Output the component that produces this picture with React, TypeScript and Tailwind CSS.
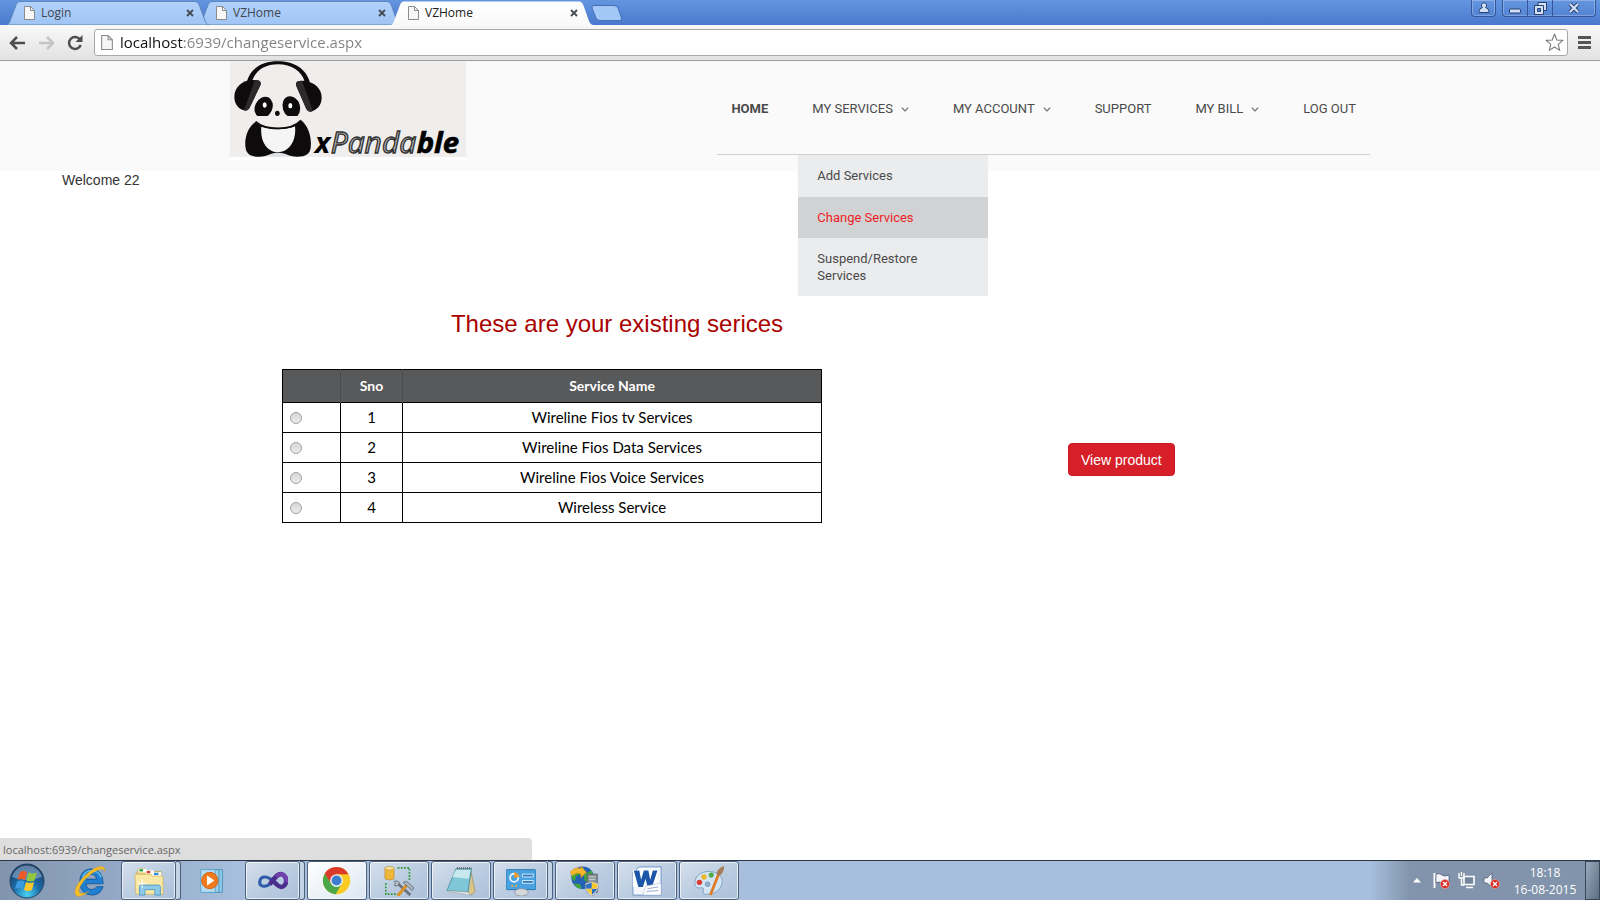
import type { ReactNode } from "react";

const UI = "font-['Open_Sans','Noto_Sans',sans-serif]";

function PageIcon({ className }: { className: string }) {
  return (
    <svg viewBox="0 0 11 14" className={className} aria-hidden="true">
      <path d="M.5.5h6l4 4v9H.5z" fill="#f7f7f7" stroke="#8b8b8b" />
      <path d="M6.5.5v4h4" fill="none" stroke="#8b8b8b" />
    </svg>
  );
}

function BrowserTab({ title, active, className }: { title: string; active?: boolean; className: string }) {
  return (
    <div className={`relative h-6 w-[203px] shrink-0 ${className}`}>
      <svg viewBox="0 0 203 24" preserveAspectRatio="none" className="absolute inset-0 size-full" aria-hidden="true">
        <defs>
          <linearGradient id={active ? "tabOn" : "tabOff"} x1="0" y1="0" x2="0" y2="1">
            <stop offset="0" stopColor={active ? "#ffffff" : "#b2d2fb"} />
            <stop offset="1" stopColor={active ? "#f9f9f9" : "#9fc4f4"} />
          </linearGradient>
        </defs>
        <path
          d="M0 24C1.500 23.500 2 22.500 3 20L9 4Q10.200.5 13 .5H188Q191 .5 192.300 4L198 20C199 22.500 200 23.500 202 24Z"
          fill={active ? "url(#tabOn)" : "url(#tabOff)"}
          stroke={active ? "none" : "#5f86bd"}
        />
      </svg>
      <div className="relative flex h-full items-center pl-[17px] pr-4">
        <PageIcon className="h-[14px] w-[11px]" />
        <span className={`ml-[6px] flex-1 text-xs ${active ? "text-[#222]" : "text-[#3f4650]"}`}>{title}</span>
        <button type="button" aria-label={`Close ${title}`} className="flex size-2">
          <svg viewBox="0 0 8 8" className="size-2" aria-hidden="true">
            <path d="M1 1l6 6M7 1L1 7" stroke="#454b54" strokeWidth="1.800" />
          </svg>
        </button>
      </div>
    </div>
  );
}

function Chevron() {
  return (
    <svg viewBox="0 0 8 5" className="h-[5px] w-2" aria-hidden="true">
      <path d="M.8.6L4 3.900 7.200.6" fill="none" stroke="#666" strokeWidth="1.100" />
    </svg>
  );
}

function Logo() {
  return (
    <svg viewBox="30 15 708 297" className="h-[99px] w-[236px] shrink-0 overflow-visible" role="img" aria-label="xPandable">
      <rect x="30" y="15" width="708" height="288" fill="#efeeed" />
      <rect x="30" y="303" width="708" height="9" fill="#fff" />
      <path d="M80 78C92 35 128 16 174 16S258 36 270 80L254 77C245 45 215 25 174 25S105 45 96 77Z" fill="#0d0b0c" />
      <path d="M98 72C68 72 43 94 43 122C43 145 56 158 72 163Q82 166 88 157L121 88Q125 75 113 73Z" fill="#0d0b0c" />
      <path d="M104 74L72 163Q82 167 88 157L121 88Q125 76 113 73Z" fill="#2d2a2b" />
      <path d="M252 74C284 78 305 98 305 124C305 147 293 160 276 166Q265 170 259 159L229 90Q225 76 238 75Z" fill="#0d0b0c" />
      <path d="M246 74L279 165Q266 171 259 159L229 90Q225 77 238 75Z" fill="#2d2a2b" />
      <ellipse cx="131" cy="154" rx="26" ry="33" transform="rotate(25 131 154)" fill="#0d0b0c" />
      <ellipse cx="214" cy="153" rx="26" ry="33" transform="rotate(-18 214 153)" fill="#0d0b0c" />
      <ellipse cx="134" cy="147" rx="6" ry="8" fill="#fff" />
      <ellipse cx="211" cy="149" rx="6" ry="8" fill="#fff" />
      <ellipse cx="172" cy="172" rx="7" ry="8" fill="#0d0b0c" />
      <path d="M107 197C82 213 72 250 77 277C80 296 95 303 118 302C145 301 158 291 174 291C190 291 205 302 232 302C257 302 270 293 272 275C276 244 264 208 243 193C229 208 205 215 174 216C144 216 122 210 107 197Z" fill="#0d0b0c" />
      <path d="M107 197C122 210 144 216 174 216S229 208 243 193V180H107Z" fill="#efeeed" />
      <path d="M124 212C140 218 157 220 174 220S210 218 225 211C230 252 209 288 174 289C139 287 120 254 124 212Z" fill="#f5f5f5" />
      <path d="M107 197C122 211 144 217 174 217S229 208 243 193" fill="none" stroke="#0d0b0c" strokeWidth="5" />
      <path d="M135 302Q174 278 214 302Z" fill="#dfe3e6" />
      <g fontFamily="'Open Sans', sans-serif" fontStyle="italic">
        <text x="284" y="290" fontSize="88" fontWeight="700" fill="#000">x</text>
        <text x="332" y="290" fontSize="90" fontWeight="400" fill="#bdbdbd" stroke="#333" strokeWidth="4">Panda</text>
        <text x="590" y="290" fontSize="88" fontWeight="700" fill="#000" stroke="#000" strokeWidth="2">ble</text>
      </g>
    </svg>
  );
}

function NavItem({ label, menu, bold, children }: { label: string; menu?: boolean; bold?: boolean; children?: ReactNode }) {
  return (
    <li className="relative">
      <a href="#" className={`flex h-[93px] items-center gap-2 px-[14px] pt-[3px] ${bold ? "font-bold" : ""}`}>
        {label}
        {menu && <Chevron />}
      </a>
      {children}
    </li>
  );
}

const services = ["Wireline Fios tv Services", "Wireline Fios Data Services", "Wireline Fios Voice Services", "Wireless Service"];

const icons: Record<string, ReactNode> = {
  explorer: (
    <>
      <path d="M3 8l2-5h8l2 3h14q1 0 1 1v19H3z" fill="#e9cf77" stroke="#b8993f" strokeWidth=".7" />
      <path d="M5 3h9v4H5z" fill="#fff" />
      <path d="M6 3.500h4v2.500H6z" fill="#24a336" />
      <path d="M13 5h9v4h-9z" fill="#fff" />
      <path d="M14 5.500h4v2.500h-4z" fill="#d4422c" />
      <path d="M20 7h10v4H20z" fill="#fff" />
      <path d="M22 7.500h5v2.500h-5z" fill="#2f8fd8" />
      <path d="M1 9h17l2 2h11q1 0 1 1v19H2z" fill="#f9e8a6" stroke="#c9aa50" strokeWidth=".7" />
      <path d="M6 32v-9q0-2 2-2h19q2 0 2 2v9h-6v-6H12v6z" fill="#8fcbe9" stroke="#4f98c5" />
      <path d="M9 14v10M4 19h10" stroke="#fff" />
    </>
  ),
  media: (
    <>
      <path d="M12 4h15v25H12z" fill="#8cc6e6" stroke="#4e96bd" />
      <path d="M8 4h15v25H8z" fill="#9bd0ec" stroke="#4e96bd" />
      <path d="M3 4h16v25H3z" fill="#b4dcf2" stroke="#5ba3ca" />
      <circle cx="13" cy="16" r="9" fill="#f07a1e" stroke="#d25c0c" />
      <path d="M10 10.500v11l8-5.500z" fill="#fff" />
    </>
  ),
  vs: (
    <>
      <path d="M16 17C12 11 3 10 2 17C1 24 10 24 16 17" fill="none" stroke="#2f5ca9" strokeWidth="3.500" />
      <path d="M13 20C19 13 21 8 26 9C32 10 33 22 26 23C21 23 19 18 14 14" fill="none" stroke="#4a2f8f" strokeWidth="5" />
      <path d="M20 12Q23 8 27 9Q32 11 31 18" fill="none" stroke="#7440ae" strokeWidth="4" />
    </>
  ),
  chrome: (
    <>
      <circle cx="16" cy="16" r="15" fill="#f9cb23" />
      <path d="M3 8.500A15 15 0 0 0 15 31L22 19L16 16L10 19Z" fill="#4ba747" />
      <path d="M3 8.500A15 15 0 0 1 29 9H16L10 19Z" fill="#db3a2b" />
      <circle cx="16" cy="16" r="7" fill="#f4f4f4" />
      <circle cx="16" cy="16" r="5.500" fill="#3d7dcc" />
    </>
  ),
  sql: (
    <>
      <path d="M15 2h13v14M2 19v12h12" fill="none" stroke="#2f9638" strokeWidth="1.800" strokeDasharray="2 1.500" />
      <path d="M1 2v12q5 3 10 0V2z" fill="#f0b83a" stroke="#b78018" strokeWidth=".6" />
      <ellipse cx="6" cy="2.500" rx="5" ry="2" fill="#fae39a" stroke="#b78018" strokeWidth=".6" />
      <path d="M16 20l13 12" stroke="#68717c" strokeWidth="3" />
      <path d="M11 17q3-2 6 1l-1 3q-3 2-5 0l2-2z" fill="#b7c0ca" stroke="#68717c" />
      <path d="M15 33l10-12" stroke="#d99327" strokeWidth="3.500" />
      <path d="M21 18l4-1 8 7-2 3z" fill="#aeb8c3" stroke="#636d78" />
    </>
  ),
  notepad: (
    <>
      <path d="M27 4l5 24-4 4-4-3z" fill="#d8c58b" stroke="#998553" strokeWidth=".7" />
      <path d="M11 3h17l-4 26-23-2z" fill="#7fc7d6" stroke="#4a91a3" />
      <path d="M11 4h16l-2 10-18-2z" fill="#c8e9ee" />
      <path d="M1 27l23 2 4 3-25-4z" fill="#f8fafb" stroke="#8a979b" strokeWidth=".6" />
      <path d="M12 2.500h16" stroke="#5f6c6e" strokeWidth="2.500" strokeDasharray="1.200 1" />
    </>
  ),
  control: (
    <>
      <rect x="0" y="4" width="33" height="22" rx="1.500" fill="#4aa3df" stroke="#2273b0" />
      <circle cx="9" cy="13" r="4.500" fill="none" stroke="#e8f5ff" strokeWidth="2" />
      <path d="M9 13V7a6 6 0 0 1 5.500 5z" fill="#f39a2c" />
      <path d="M18 9h12v3H18zM18 16h12v3H18z" fill="#2a77b8" stroke="#e3f3ff" />
      <circle cx="7" cy="22" r="1.200" fill="#f6a63a" />
      <circle cx="11" cy="22" r="1.200" fill="#f6a63a" />
      <ellipse cx="17" cy="29" rx="7.500" ry="4" fill="#d5d9dd" stroke="#8f979e" />
    </>
  ),
  iis: (
    <>
      <circle cx="14" cy="13" r="12.500" fill="#2461b4" />
      <path d="M5 6q5-5 9-3l-2 6-5 2-2 6-4-5zM15 9l9-4 2 8-5 6-5-3zM4 19l7 1 2 5-5-1z" fill="#3fa53c" />
      <path d="M0 7q6-7 12-4V0l6 7-6 6V9Q7 6 3 11z" fill="#f4b62c" stroke="#c68816" strokeWidth=".6" />
      <path d="M19 9h11v20H19z" fill="#8b9298" stroke="#5c6369" />
      <path d="M21 12h7M21 15h7" stroke="#d8dcdf" />
      <path d="M24 17q4 2 7 2 1 10-7 14-8-4-7-14 3 0 7-2z" fill="#f3f3f3" stroke="#777" strokeWidth=".6" />
      <path d="M24 18v7h-6q-1-3 0-5 3 0 6-2zM24 25h6q-2 4-6 7z" fill="#2c6fc2" />
      <path d="M24 18q3 2 6 2v5h-6zM24 25v7q-4-3-6-7z" fill="#f6c62d" />
    </>
  ),
  word: (
    <>
      <path d="M8 1h24v31H1V7z" fill="#f3f7fc" stroke="#6b8fc4" />
      <path d="M1 4h27v19H1z" fill="#fdfeff" />
      <path d="M2 5h6l2 10 3-10h5l2 10 3-10h5l-6 18h-5l-2-9-3 9H7z" fill="#1d55a8" />
      <path d="M15 22l17-3v13H12z" fill="#fff" stroke="#a5b7d2" strokeWidth=".6" />
      <path d="M17 25l12-2M16 28l13-1" stroke="#8ba4cd" />
    </>
  ),
  paint: (
    <>
      <path d="M1 20C0 12 7 6 16 6C25 6 32 11 31 18C30 27 21 32 12 31C7 30 13 25 9 24C5 24 2 25 1 20Z" fill="#d3e5f3" stroke="#7c9fbe" />
      <circle cx="6" cy="18" r="3" fill="#d93c32" />
      <circle cx="11" cy="12" r="3" fill="#e9b72e" />
      <circle cx="19" cy="10" r="2.800" fill="#51a84b" />
      <circle cx="15" cy="20" r="2.500" fill="#8fb4d4" stroke="#6f93b3" />
      <path d="M18 32l9-23" stroke="#df7a22" strokeWidth="3" />
      <path d="M25 9q0-6 8-9 1 6-5 11z" fill="#a67b55" />
    </>
  ),
};

function Glyph({ name }: { name: string }) {
  return (
    <svg viewBox="0 0 33 33" className="size-[30px]" aria-hidden="true">
      {icons[name]}
    </svg>
  );
}

function TaskButton({ name, label, stacked, active }: { name: string; label: string; stacked?: boolean; active?: boolean }) {
  return (
    <div className="flex h-[39px]">
      <button
        type="button"
        aria-label={label}
        className={`flex items-center justify-center rounded-[3px] border border-[#4d617d] shadow-[inset_0_0_0_1px_rgba(255,255,255,.65)] ${
          stacked ? "w-[55px]" : "w-[60px]"
        } ${active ? "bg-linear-to-br from-white to-[#dce7f3]" : "bg-linear-to-br from-[#d6e0ed] via-[#bccde1] to-[#abc0da]"}`}
      >
        <Glyph name={name} />
      </button>
      {stacked && <span className="w-[5px] rounded-r-[3px] border-y border-r border-[#4d617d] bg-[#c3d2e4]" />}
    </div>
  );
}

function StartOrb() {
  return (
    <svg viewBox="0 0 36 36" className="size-9" aria-hidden="true">
      <defs>
        <radialGradient id="orb" cx=".5" cy=".9" r=".9">
          <stop offset="0" stopColor="#46d3f5" />
          <stop offset=".45" stopColor="#1c6aa6" />
          <stop offset="1" stopColor="#183a64" />
        </radialGradient>
      </defs>
      <circle cx="18" cy="18" r="17" fill="url(#orb)" stroke="#28425f" />
      <path d="M3 14A15.500 15.500 0 0 1 33 14Q18 20 3 14Z" fill="#a9c4dc" opacity=".5" />
      <path d="M11 9Q14 7 18 9L16 17Q12 15 8.500 17Z" fill="#ee5a25" />
      <path d="M19.500 9.500Q23 11.500 28 9.500L25.500 17.500Q21 19.500 17.500 17.500Z" fill="#93c83e" />
      <path d="M8 18.500Q12 16.500 15.500 18.500L13.500 26Q10 24 6 26Z" fill="#3b9be0" />
      <path d="M17 19Q21 21 25 19L23 27Q19 29 15 27Z" fill="#fdc62f" />
    </svg>
  );
}

function IeIcon() {
  return (
    <svg viewBox="0 0 34 34" className="size-8" aria-hidden="true">
      <path d="M31 20H13q0 6 6 6 4 0 5-3h7q-3 9-12 9-12-1-13-13Q6 5 18 4q13 1 13 16zM13 15h11q-1-5-5.500-5T13 15z" fill="#1f7fd0" stroke="#12508f" strokeWidth=".8" />
      <path d="M9 13Q12 6 18 6q8 0 11 7" fill="none" stroke="#6fc0f2" strokeWidth="1.500" />
      <path d="M3 33C-3 29 5 15 18 6C26 0 34 0 33 7C32 3 26 4 19 9C9 16 2 28 7 30Q11 31 16 28Q7 35 3 33Z" fill="#f2bd2b" stroke="#d29a15" strokeWidth=".4" />
    </svg>
  );
}

function RedCross({ x, y }: { x: number; y: number }) {
  return (
    <g>
      <circle cx={x} cy={y} r="4.500" fill="#d9281f" stroke="#f4b7b2" strokeWidth=".6" />
      <path d={`M${x - 2} ${y - 2}l4 4M${x + 2} ${y - 2}l-4 4`} stroke="#fff" strokeWidth="1.400" />
    </g>
  );
}

export default function App() {
  return (
    <div className="flex min-h-screen flex-col bg-white">
      <header className={UI}>
        <div className="flex h-[25px] items-end justify-between bg-linear-to-b from-[#6496df] to-[#4a78cd]">
          <div className="flex items-end pl-[7px]">
            <BrowserTab title="Login" className="z-10" />
            <BrowserTab title="VZHome" className="-ml-[11px]" />
            <BrowserTab title="VZHome" active className="z-20 -ml-[11px]" />
            <button type="button" aria-label="New tab" className="mb-1 -ml-[3px]">
              <svg viewBox="0 0 32 16" className="h-4 w-8" aria-hidden="true">
                <path d="M3 .5H23Q26 .5 27 3L30.500 13Q31 15.500 29 15.500H9Q6 15.500 5 13L1 3Q.5.500 3 .5Z" fill="#a3c7f7" stroke="#456fb4" />
              </svg>
            </button>
          </div>
          <div className="flex h-full items-start gap-[6px] pr-1">
            <button type="button" aria-label="Profile" className="flex h-[17px] w-[25px] items-center justify-center rounded-b border border-t-0 border-[#34589b] shadow-[inset_0_0_0_1px_rgba(255,255,255,.25)]">
              <svg viewBox="0 0 12 12" className="size-3" aria-hidden="true">
                <path d="M6 .8a2.600 2.600 0 0 1 1.500 4.700Q11 6.500 11 9.500V10.500H1V9.500Q1 6.500 4.500 5.500A2.600 2.600 0 0 1 6 .8z" fill="#d2e0f7" stroke="#27406f" />
              </svg>
            </button>
            <div className="flex h-[17px] divide-x divide-[#34589b] rounded-b border border-t-0 border-[#34589b] shadow-[inset_0_0_0_1px_rgba(255,255,255,.25)]">
              <button type="button" aria-label="Minimize" className="flex w-[25px] items-center justify-center">
                <svg viewBox="0 0 12 12" className="size-3" aria-hidden="true">
                  <rect x=".5" y="7" width="11" height="4" rx="1" fill="#d2e0f7" stroke="#27406f" />
                </svg>
              </button>
              <button type="button" aria-label="Restore" className="flex w-[25px] items-center justify-center">
                <svg viewBox="0 0 13 13" className="size-[13px]" aria-hidden="true">
                  <path d="M4 .5h8.500v8H4z" fill="#d2e0f7" stroke="#27406f" />
                  <path d="M.5 3.500h9v9h-9z" fill="#d2e0f7" stroke="#27406f" />
                  <path d="M3.500 6.500h3v3h-3z" fill="#4f7fd0" stroke="#27406f" />
                </svg>
              </button>
              <button type="button" aria-label="Close" className="flex w-[42px] items-center justify-center">
                <svg viewBox="0 0 12 12" className="size-3" aria-hidden="true">
                  <path d="M2 2l8 8M10 2l-8 8" stroke="#27406f" strokeWidth="4" />
                  <path d="M2 2l8 8M10 2l-8 8" stroke="#d2e0f7" strokeWidth="2.200" />
                </svg>
              </button>
            </div>
          </div>
        </div>
        <div className="flex h-9 items-center border-b border-[#a0a0a0] bg-linear-to-b from-[#f9f9f9] to-[#e2e2e2] pl-[9px] pr-[9px]">
          <button type="button" aria-label="Back" className="flex size-4">
            <svg viewBox="0 0 16 16" className="size-4" aria-hidden="true">
              <path d="M8 2L2 8l6 6M2.500 8H16" fill="none" stroke="#4d4d4d" strokeWidth="2.500" />
            </svg>
          </button>
          <button type="button" aria-label="Forward" className="ml-[14px] flex size-4">
            <svg viewBox="0 0 16 16" className="size-4" aria-hidden="true">
              <path d="M8 2l6 6-6 6M13.500 8H0" fill="none" stroke="#c4c4c4" strokeWidth="2.500" />
            </svg>
          </button>
          <button type="button" aria-label="Reload" className="ml-3 flex size-4">
            <svg viewBox="0 0 16 16" className="size-4" aria-hidden="true">
              <path d="M13 4.500A6 6 0 1 0 13.700 10" fill="none" stroke="#4d4d4d" strokeWidth="2.500" />
              <path d="M15.500 0v7H8.500z" fill="#4d4d4d" />
            </svg>
          </button>
          <div className="ml-[11px] flex h-[27px] flex-1 items-center rounded-[3px] border border-[#a9a9a9] bg-white pl-[6px] pr-[3px]">
            <PageIcon className="h-[15px] w-3" />
            <input
              aria-label="Address"
              defaultValue="localhost:6939/changeservice.aspx"
              className="ml-[7px] min-w-0 flex-1 bg-linear-to-r from-[#111] from-[64px] to-[#808080] to-[64px] bg-clip-text text-[15px] text-transparent outline-none"
            />
            <button type="button" aria-label="Bookmark this page" className="flex size-[19px]">
              <svg viewBox="0 0 18 18" className="size-[19px]" aria-hidden="true">
                <path d="M9 1l2.200 5.600 5.800.4-4.500 3.700 1.500 5.800L9 13.300 4 16.500l1.500-5.800L1 7l5.800-.4z" fill="#fff" stroke="#777" strokeLinejoin="round" />
              </svg>
            </button>
          </div>
          <button type="button" aria-label="Menu" className="ml-[10px] flex">
            <svg viewBox="0 0 13 13" className="size-[13px]" aria-hidden="true">
              <path d="M0 1.500h13M0 6.500h13M0 11.500h13" stroke="#555" strokeWidth="3" />
            </svg>
          </button>
        </div>
      </header>

      <main className="relative flex-1 font-['Liberation_Sans',Arial,sans-serif] text-sm text-[#333]">
        <div className="h-[110px] bg-[#fafafa]">
          <div className="mx-auto flex max-w-[1170px] items-start justify-between px-[15px]">
            <Logo />
            <nav className="border-b border-[#d0d0d0] font-[Roboto,sans-serif] text-[13px] text-[#4a4a4a]">
              <ul className="flex gap-4">
                <NavItem label="HOME" bold />
                <NavItem label="MY SERVICES" menu>
                  <ul className="absolute left-0 top-full z-10 mt-px w-[190px] bg-[#ebecee] leading-[17px]">
                    <li><a href="#" className="block px-[19px] pb-[13px] pt-3">Add Services</a></li>
                    <li><a href="#" className="block bg-[#d1d2d4] px-[19px] py-3 text-[#ed1c24]">Change Services</a></li>
                    <li><a href="#" className="block px-[19px] py-3">Suspend/Restore Services</a></li>
                  </ul>
                </NavItem>
                <NavItem label="MY ACCOUNT" menu />
                <NavItem label="SUPPORT" />
                <NavItem label="MY BILL" menu />
                <NavItem label="LOG OUT" />
              </ul>
            </nav>
          </div>
        </div>

        <p className="pl-[62px] leading-[18px]">Welcome 22</p>

        <section className="mt-[119px] pl-[282px]">
          <h1 className="w-[670px] text-center text-2xl text-[#a90000]">These are your existing serices</h1>
          <div className="mt-[29px] flex items-start">
            <table className="w-[540px] table-fixed border-collapse border border-black text-center font-[Lato,sans-serif] text-[15px] text-black">
              <thead>
                <tr className="h-[33px] bg-[#58595b] text-sm text-white">
                  <th scope="col" aria-label="Select" className="w-[58px] border-r border-[#4b4c4e]" />
                  <th scope="col" className="w-[62px] border-r border-[#4b4c4e] font-bold">Sno</th>
                  <th scope="col" className="font-bold">Service Name</th>
                </tr>
              </thead>
              <tbody>
                {services.map((name, i) => (
                  <tr key={name} className="h-[30px]">
                    <td className="border border-black pl-[7px] text-left">
                      <input
                        type="radio"
                        name="service"
                        aria-label={name}
                        className="block size-3 appearance-none rounded-full border border-[#a3a3a3] bg-linear-to-b from-[#d6d6d6] to-[#ececec]"
                      />
                    </td>
                    <td className="border border-black">{i + 1}</td>
                    <td className="border border-black">{name}</td>
                  </tr>
                ))}
              </tbody>
            </table>
            <button type="button" className="ml-[246px] mt-[74px] h-[33px] rounded border border-[#c81c25] bg-[#d61f28] px-3 text-white">
              View product
            </button>
          </div>
        </section>

        <div className={`absolute bottom-0 left-0 h-[22px] w-[532px] rounded-tr bg-[#dedede] pl-[3px] text-[11px] leading-6 text-[#666] ${UI}`}>
          localhost:6939/changeservice.aspx
        </div>
      </main>

      <footer className={`flex h-10 items-end justify-between border-t border-[#2b3646] bg-linear-to-r from-[#8194ae] via-[#a7bfdd] via-15% to-[#a7bfdd] ${UI}`}>
        <div className="flex items-end">
          <button type="button" aria-label="Start" className="flex h-[39px] w-[54px] items-center justify-center"><StartOrb /></button>
          <button type="button" aria-label="Internet Explorer" className="ml-[10px] flex h-[39px] w-[52px] items-center justify-center"><IeIcon /></button>
          <div className="ml-[5px] flex items-end gap-[2px]">
            <TaskButton name="explorer" label="Windows Explorer" stacked />
            <button type="button" aria-label="Media Player" className="flex h-[39px] w-[60px] items-center justify-center"><Glyph name="media" /></button>
            <TaskButton name="vs" label="Visual Studio" stacked />
            <TaskButton name="chrome" label="Google Chrome" active />
            <TaskButton name="sql" label="SQL Server Management Studio" />
            <TaskButton name="notepad" label="Notepad" />
            <TaskButton name="control" label="Control Panel" stacked />
            <TaskButton name="iis" label="IIS Manager" />
            <TaskButton name="word" label="Word" />
            <TaskButton name="paint" label="Paint" />
          </div>
        </div>
        <div className="flex h-[39px] items-center bg-linear-to-r from-[#a7bfdd] to-[#8194ab] to-[40px] text-white">
          <button type="button" aria-label="Show hidden icons" className="ml-[43px] flex">
            <svg viewBox="0 0 8 5" className="h-[5px] w-2" aria-hidden="true"><path d="M4 0l4 4.500H0z" fill="#fff" /></svg>
          </button>
          <svg viewBox="0 0 17 17" className="ml-3 size-[17px]" role="img" aria-label="Action Center">
            <path d="M1.500 1v15" stroke="#fff" strokeWidth="2" />
            <path d="M3 2q4-1 6 1t7 0v8q-4 2-7 0t-6 0z" fill="#f2f5f9" stroke="#43536a" strokeWidth=".7" />
            <RedCross x={12} y={12} />
          </svg>
          <svg viewBox="0 0 17 17" className="ml-2 size-[17px]" role="img" aria-label="Network">
            <path d="M6 4.500h10v8H6zM8 15.500h7" fill="#73869e" stroke="#fff" strokeWidth="1.600" />
            <path d="M1 1v5h5V1M3.500 0v4M3.500 6v7H6" fill="none" stroke="#fff" strokeWidth="1.400" />
          </svg>
          <svg viewBox="0 0 17 17" className="ml-2 size-[17px]" role="img" aria-label="Volume muted">
            <path d="M1 6h3l5-5v14l-5-4H1z" fill="#f2f5f9" stroke="#43536a" strokeWidth=".7" />
            <RedCross x={12} y={12} />
          </svg>
          <div className="ml-3 w-[66px] text-center text-xs leading-[17px]">
            <p>18:18</p>
            <p className="whitespace-nowrap">16-08-2015</p>
          </div>
          <button type="button" aria-label="Show desktop" className="ml-[7px] h-full w-[15px] border border-[#39475a] bg-linear-to-br from-[#9aa9bb] to-[#5e6e82]" />
        </div>
      </footer>
    </div>
  );
}
